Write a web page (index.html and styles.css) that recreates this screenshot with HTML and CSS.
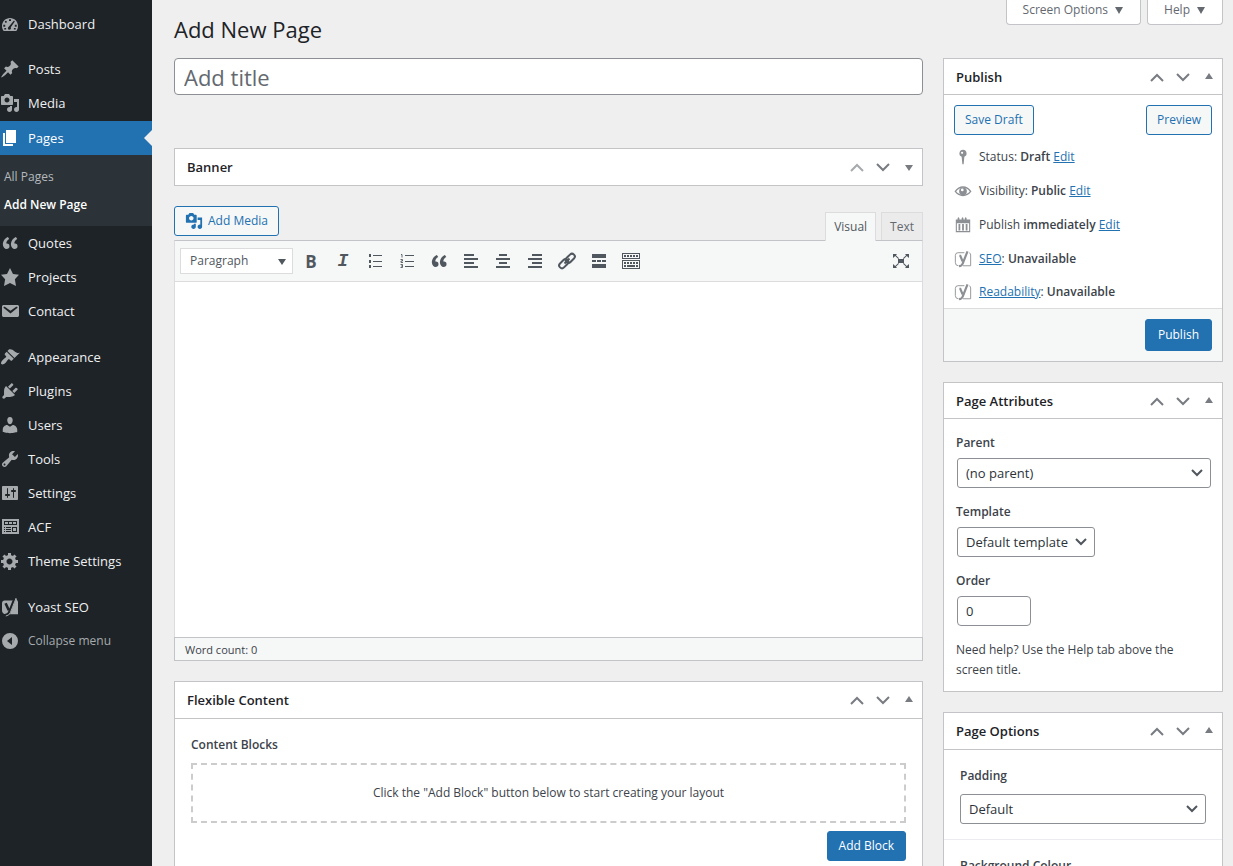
FILE: index.html
```html
<!DOCTYPE html>
<html lang="en">
<head>
<meta charset="utf-8">
<meta name="viewport" content="width=device-width, initial-scale=1">
<title>Add New Page</title>
<link rel="stylesheet" href="styles.css">
</head>
<body>
<svg class="sprite" aria-hidden="true">
  <symbol id="i-dashboard" viewBox="0 0 20 20"><path fill-rule="evenodd" d="M3.76 17h12.48c1.1-1.37 1.76-3.11 1.76-5 0-4.42-3.58-8-8-8s-8 3.58-8 8c0 1.89.66 3.63 1.76 5zM9 5.2h2v1.9H9zM5 7.200a1 1 0 1 1 1.600 1.200A1 1 0 0 1 5 7.200zM3.300 10.800h1.900v1.900H3.300zM14.800 10.800h1.900v1.900h-1.900zM14 6.600l.8.8-4 5.900c.5 1.300-.1 2.500-1.400 2.500-1.600 0-2.100-1.900-.9-2.800zM4.300 14h1.800v1.500H4.300zM13.900 14h1.800v1.500h-1.800z"/></symbol>
  <symbol id="i-post" viewBox="0 0 20 20"><path d="M10.440 3.020l1.820-1.820 6.360 6.350-1.830 1.820c-1.050-.68-2.480-.57-3.410.36l-.75.75c-.92.93-1.040 2.350-.35 3.410l-1.830 1.820-2.410-2.410-2.800 2.790c-.42.42-3.380 2.710-3.800 2.290s1.860-3.390 2.280-3.810l2.790-2.790L4.100 9.360l1.830-1.820c1.050.69 2.480.57 3.400-.36l.75-.75c.93-.92 1.050-2.350.36-3.410z"/></symbol>
  <symbol id="i-media" viewBox="0 0 20 20"><path d="M13 11V4c0-.55-.45-1-1-1h-1.670L9 1H5L3.670 3H2c-.55 0-1 .45-1 1v7c0 .55.45 1 1 1h10c.55 0 1-.45 1-1zM7 4.500c1.380 0 2.500 1.120 2.500 2.500S8.380 9.500 7 9.500 4.500 8.380 4.500 7 5.620 4.500 7 4.500zM14 6h5v10.500c0 1.380-1.120 2.500-2.500 2.500S14 17.880 14 16.500s1.120-2.500 2.500-2.500c.17 0 .34.02.5.05V9h-3V6zm-4 8.050V13h2v3.500c0 1.380-1.120 2.500-2.500 2.500S7 17.880 7 16.500 8.120 14 9.500 14c.17 0 .34.02.5.05z"/></symbol>
  <symbol id="i-page" viewBox="0 0 20 20"><path d="M6 15V2h10v13H6zm-1 1h8v2H3V5h2v11z"/></symbol>
  <symbol id="i-quote" viewBox="0 0 20 20"><path d="M9.490 13.220c0-.74-.2-1.380-.61-1.900-.62-.78-1.830-.88-2.530-.72-.29-1.650 1.110-3.750 2.920-4.650L7.880 4c-2.730 1.300-5.420 4.280-4.960 8.050C3.210 14.430 4.590 16 6.540 16c.85 0 1.560-.25 2.120-.75s.83-1.180.83-2.030zm8.050 0c0-.74-.2-1.380-.61-1.900-.63-.78-1.830-.88-2.530-.72-.29-1.650 1.110-3.750 2.920-4.650L15.930 4c-2.730 1.300-5.410 4.280-4.950 8.050.29 2.380 1.660 3.950 3.610 3.950.85 0 1.560-.25 2.120-.75s.83-1.180.83-2.030z"/></symbol>
  <symbol id="i-star" viewBox="0 0 20 20"><path d="m10 1 3 6 6 .75-4.120 4.620L16 19l-6-3-6 3 1.130-6.630L1 7.750 7 7z"/></symbol>
  <symbol id="i-email" viewBox="0 0 20 20"><path d="M3.870 4h13.250C18.370 4 19 4.590 19 5.790v8.420c0 1.190-.63 1.790-1.880 1.790H3.870c-1.250 0-1.880-.6-1.880-1.790V5.790c0-1.200.63-1.790 1.880-1.790zm6.620 8.600l6.740-5.530c.24-.2.43-.66.13-1.070-.29-.41-.82-.42-1.170-.17l-5.700 3.860L4.800 5.830c-.35-.25-.88-.24-1.170.17-.3.41-.11.87.13 1.070z"/></symbol>
  <symbol id="i-brush" viewBox="0 0 20 20"><path d="M14.480 11.060L7.410 3.990l1.500-1.500c.5-.56 2.300-.47 3.510.32 1.210.8 1.430 1.280 2.910 2.100 1.180.64 2.450 1.260 4.450.85zm-.71.71L6.700 4.700 4.930 6.470c-.39.39-.39 1.020 0 1.410l1.060 1.060c.39.39.39 1.030 0 1.420-.6.6-1.430 1.110-2.210 1.690-.35.26-.7.53-1.010.84C1.430 14.230.4 16.080 1.400 17.070c.99 1 2.840-.03 4.180-1.360.31-.31.58-.66.85-1.020.57-.78 1.080-1.610 1.690-2.210.39-.39 1.020-.39 1.410 0l1.060 1.060c.39.39 1.020.39 1.410 0z"/></symbol>
  <symbol id="i-plug" viewBox="0 0 20 20"><path d="M13.110 4.360L9.870 7.600 8 5.730l3.240-3.240c.35-.34 1.050-.2 1.560.32.52.51.66 1.210.31 1.550zm-8 1.770l.91-1.120 9.010 9.010-1.190.84c-.71.71-2.630 1.160-3.820 1.160H6.140L4.900 17.260c-.59.59-1.540.59-2.120 0-.59-.58-.59-1.530 0-2.120l1.240-1.240v-3.880c0-1.130.4-3.190 1.090-3.890zm7.260 3.970l3.240-3.240c.34-.35 1.040-.21 1.550.31.52.51.66 1.210.31 1.550l-3.240 3.250z"/></symbol>
  <symbol id="i-user" viewBox="0 0 20 20"><path d="M10 9.250c-2.270 0-2.730-3.440-2.730-3.440C7 4.020 7.820 2 9.970 2c2.160 0 2.980 2.020 2.710 3.810 0 0-.41 3.440-2.680 3.440zm0 2.570L12.720 10c2.390 0 4.520 2.330 4.520 4.530v2.490s-3.650 1.130-7.240 1.130c-3.650 0-7.240-1.130-7.240-1.130v-2.490c0-2.250 1.940-4.480 4.470-4.480z"/></symbol>
  <symbol id="i-tools" viewBox="0 0 20 20"><path d="M16.680 9.770c-1.340 1.340-3.300 1.670-4.950.99l-5.410 6.520c-.99.99-2.590.99-3.580 0s-.99-2.590 0-3.570l6.520-5.420c-.68-1.650-.35-3.610.99-4.950 1.280-1.280 3.120-1.620 4.720-1.060l-2.890 2.890 2.820 2.820 2.860-2.870c.53 1.580.18 3.390-1.080 4.650zM3.810 16.210c.4.39 1.040.39 1.430 0 .4-.4.4-1.040 0-1.430-.39-.4-1.030-.4-1.430 0-.39.39-.39 1.030 0 1.430z"/></symbol>
  <symbol id="i-sliders" viewBox="0 0 20 20"><path fill-rule="evenodd" d="M18 16V4c0-.55-.45-1-1-1H3c-.55 0-1 .45-1 1v12c0 .55.45 1 1 1h14c.55 0 1-.45 1-1zM8 11h1c.55 0 1 .45 1 1s-.45 1-1 1H8v1.500c0 .28-.22.5-.5.5s-.5-.22-.5-.5V13H6c-.55 0-1-.45-1-1s.45-1 1-1h1V5.500c0-.28.22-.5.5-.5s.5.22.5.5V11zm5-2h-1c-.55 0-1-.45-1-1s.45-1 1-1h1V5.500c0-.28.22-.5.5-.5s.5.22.5.5V7h1c.55 0 1 .45 1 1s-.45 1-1 1h-1v5.500c0 .28-.22.5-.5.5s-.5-.22-.5-.5V9z"/></symbol>
  <symbol id="i-acf" viewBox="0 0 20 20"><path fill-rule="evenodd" d="M2 2h17v15H2zM4 4v4h13V4zM4 10v1h1v-1zM6 10v1h5v-1zM4 12v1h1v-1zM6 12v1h5v-1zM4 14v1h1v-1zM6 14v1h5v-1zM12 10v5h5v-5zM13 11h3v3h-3zM5 5h3v2H5zM9 5h3v2H9zM13 5h3v2h-3z"/></symbol>
  <symbol id="i-gear" viewBox="0 0 20 20"><path d="M18 12h-2.180c-.17.7-.44 1.350-.81 1.930l1.540 1.540-2.100 2.100-1.540-1.540c-.58.36-1.230.63-1.910.79V19H8v-2.180c-.68-.16-1.330-.43-1.910-.79l-1.540 1.540-2.120-2.120 1.540-1.540c-.36-.58-.63-1.230-.79-1.910H1V9.030h2.170c.16-.7.44-1.350.8-1.940L2.430 5.550l2.100-2.100 1.540 1.540c.58-.37 1.240-.64 1.930-.81V2h3v2.180c.68.16 1.330.43 1.910.79l1.540-1.540 2.120 2.120-1.540 1.540c.36.59.64 1.240.8 1.940H18V12zm-8.500 1.500c1.660 0 3-1.340 3-3s-1.340-3-3-3-3 1.340-3 3 1.340 3 3 3z"/></symbol>
  <symbol id="i-yoast" viewBox="0 0 20 20"><path d="M4.500 3.500h7.800L16 1l2 3.800v12.400H6.500c-3 0-4.500-1.500-4.500-4V6.500c0-2 1-3 2.500-3z"/><path d="M5.600 6.300l3.200 7M14.800 1.300L9.200 15.500Q8.300 18 5.200 18" fill="none" stroke="#1d2327" stroke-width="2.600"/><path d="M16 1.300L10.400 15.500Q9.200 18.700 5.800 19" fill="none" stroke="currentColor" stroke-width="1"/></symbol>
  <symbol id="i-yoast-line" viewBox="0 0 20 20"><path d="M11.500 3H4.500Q1.500 3 1.500 6v8q0 3.500 3.500 3.500M10 17.500h8.500V5.500Q18.500 3.500 17 3.200" fill="none" stroke="currentColor"/><path d="M6 6.500h1l2.500 6M15 1.500L9.700 15Q8.600 18 5.600 18" fill="none" stroke="currentColor" stroke-width="2.400"/></symbol>
  <symbol id="i-collapse" viewBox="0 0 20 20"><path fill-rule="evenodd" d="M10 2a8 8 0 1 0 0 16 8 8 0 0 0 0-16zM12 6v8l-5-4z"/></symbol>
  <symbol id="i-up" viewBox="0 0 20 20"><path d="M4 14l6-6 6 6" fill="none" stroke="currentColor" stroke-width="2"/></symbol>
  <symbol id="i-down" viewBox="0 0 20 20"><path d="M4 7l6 6 6-6" fill="none" stroke="currentColor" stroke-width="2"/></symbol>
  <symbol id="i-tri-up" viewBox="0 0 20 20"><path d="M6 12l4-6 4 6z"/></symbol>
  <symbol id="i-tri-down" viewBox="0 0 20 20"><path d="M6 8l4 6 4-6z"/></symbol>
  <symbol id="i-caret" viewBox="0 0 10 10"><path d="M1 2h8L5 9z"/></symbol>
  <symbol id="i-pin" viewBox="0 0 20 20"><path fill-rule="evenodd" d="M10 2a4 4 0 0 0-1.500 7.700L9.300 18h1.400l.8-8.300A4 4 0 0 0 10 2zM9 4.200a1.200 1.200 0 1 1 0 2.400 1.200 1.200 0 0 1 0-2.400z"/></symbol>
  <symbol id="i-eye" viewBox="0 0 20 20"><path d="M1.500 10.500Q5 5.500 10 5.500t8.500 5Q15 15 10 15t-8.500-4.500z" fill="none" stroke="currentColor" stroke-width="1.500"/><path fill-rule="evenodd" d="M10 6a4.300 4.300 0 1 0 0 8.600A4.300 4.300 0 0 0 10 6zM9.200 7.300a1.500 1.500 0 1 1 0 3 1.500 1.500 0 0 1 0-3z"/></symbol>
  <symbol id="i-calendar" viewBox="0 0 20 20"><path fill-rule="evenodd" d="M2 4h2V2.500q1-2 2 0V4h2.500V2.500q1-2 2 0V4h1.500V2.500q1-2 2 0V4h4v14H2zM3.200 8v8.800h13.600V8zM5 9h2v7H5zM9 9h2v7H9zM13 9h2v7h-2z"/></symbol>
  <symbol id="i-ul" viewBox="0 0 20 20"><path d="M4 3h2v3H4zM4 9h2v3H4zM4 14h2v3H4zM8 4h9v1H8zM8 10h9v1H8zM8 15h9v1H8z"/></symbol>
  <symbol id="i-ol" viewBox="0 0 20 20"><path d="M8 4h9v1H8zM8 10h9v1H8zM8 15h9v1H8z"/><path d="M4 3.500h1v3M3.500 8.500h2v1.500h-1.500v1.500h2M3.500 13.500h2v3h-2M4 15h1.500" fill="none" stroke="currentColor" stroke-width=".9"/></symbol>
  <symbol id="i-left" viewBox="0 0 20 20"><path d="M3 3h10v2H3zM3 7h14v2H3zM3 11h10v2H3zM3 15h14v2H3z"/></symbol>
  <symbol id="i-center" viewBox="0 0 20 20"><path d="M6 3h8v2H6zM3 7h14v2H3zM6 11h8v2H6zM3 15h14v2H3z"/></symbol>
  <symbol id="i-right" viewBox="0 0 20 20"><path d="M7 3h10v2H7zM3 7h14v2H3zM7 11h10v2H7zM3 15h14v2H3z"/></symbol>
  <symbol id="i-link" viewBox="0 0 20 20"><g fill="none" stroke="currentColor" stroke-width="2"><rect x="8" y="4.500" width="10.500" height="5.600" rx="2.800" transform="rotate(-45 13.250 7.300)"/><rect x="1.500" y="9.900" width="10.500" height="5.600" rx="2.800" transform="rotate(-45 6.750 12.700)"/><path d="M7.500 12.500l5-5"/></g></symbol>
  <symbol id="i-more" viewBox="0 0 20 20"><path d="M3 3h14v4H3zM3 9h4v2H3zM8 9h4v2H8zM13 9h4v2h-4zM3 13h14v4H3z"/></symbol>
  <symbol id="i-sink" viewBox="0 0 20 20"><path fill-rule="evenodd" d="M1 2h18v6H1zM2 3v4h16V3zM1 9h18v9H1zM2 10v7h16v-7z"/><path d="M3 5h14M3 12h14" fill="none" stroke="currentColor" stroke-width="2" stroke-dasharray="2 1"/><path d="M3 15h2M6 15h8M15 15h2" fill="none" stroke="currentColor" stroke-width="2"/></symbol>
  <symbol id="i-full" viewBox="0 0 20 20"><path d="M7 8h6v4H7zM2 3h4L4.900 4.200 8 7.300 7.300 8 4.200 4.900 2 7zM18 3v4l-2.200-2.100L12.700 8l-.7-.7 3.100-3.100L14 3zM2 17v-4l2.200 2.100L7.300 12l.7.7-3.100 3.100L6 17zM18 17h-4l1.100-1.200L12 12.700l.7-.7 3.100 3.100L18 13z"/></symbol>
</svg>

<div class="shell">
  <nav class="menu" aria-label="Main menu">
    <a class="menu-item" href="#"><svg class="icon"><use href="#i-dashboard"/></svg>Dashboard</a>
    <div class="menu-gap"></div>
    <a class="menu-item" href="#"><svg class="icon"><use href="#i-post"/></svg>Posts</a>
    <a class="menu-item" href="#"><svg class="icon"><use href="#i-media"/></svg>Media</a>
    <a class="menu-item current" href="#"><svg class="icon"><use href="#i-page"/></svg>Pages</a>
    <div class="submenu">
      <a class="submenu-item" href="#">All Pages</a>
      <a class="submenu-item selected" href="#">Add New Page</a>
    </div>
    <a class="menu-item" href="#"><svg class="icon"><use href="#i-quote"/></svg>Quotes</a>
    <a class="menu-item" href="#"><svg class="icon"><use href="#i-star"/></svg>Projects</a>
    <a class="menu-item" href="#"><svg class="icon"><use href="#i-email"/></svg>Contact</a>
    <div class="menu-gap wide"></div>
    <a class="menu-item" href="#"><svg class="icon"><use href="#i-brush"/></svg>Appearance</a>
    <a class="menu-item" href="#"><svg class="icon"><use href="#i-plug"/></svg>Plugins</a>
    <a class="menu-item" href="#"><svg class="icon"><use href="#i-user"/></svg>Users</a>
    <a class="menu-item" href="#"><svg class="icon"><use href="#i-tools"/></svg>Tools</a>
    <a class="menu-item" href="#"><svg class="icon"><use href="#i-sliders"/></svg>Settings</a>
    <a class="menu-item" href="#"><svg class="icon"><use href="#i-acf"/></svg>ACF</a>
    <a class="menu-item" href="#"><svg class="icon"><use href="#i-gear"/></svg>Theme Settings</a>
    <div class="menu-gap wide"></div>
    <a class="menu-item" href="#"><svg class="icon"><use href="#i-yoast"/></svg>Yoast SEO</a>
    <button class="menu-item collapse" type="button"><svg class="icon"><use href="#i-collapse"/></svg>Collapse menu</button>
  </nav>

  <main class="content">
    <header class="top">
      <h1 class="page-title">Add New Page</h1>
      <div class="screen-links">
        <button class="screen-link" type="button">Screen Options <svg class="caret"><use href="#i-caret"/></svg></button>
        <button class="screen-link" type="button">Help <svg class="caret"><use href="#i-caret"/></svg></button>
      </div>
    </header>

    <div class="columns">
      <div class="primary">
        <input class="title-input" type="text" placeholder="Add title" aria-label="Add title">

        <section class="box">
          <header class="box-head">
            <h2 class="box-title">Banner</h2>
            <button class="handle dim" type="button" aria-label="Move up"><svg class="icon"><use href="#i-up"/></svg></button>
            <button class="handle" type="button" aria-label="Move down"><svg class="icon"><use href="#i-down"/></svg></button>
            <button class="handle" type="button" aria-label="Toggle panel"><svg class="icon"><use href="#i-tri-down"/></svg></button>
          </header>
        </section>

        <section class="editor">
          <div class="editor-top">
            <button class="button" type="button"><svg class="icon"><use href="#i-media"/></svg>Add Media</button>
            <div class="tabs">
              <button class="tab active" type="button">Visual</button>
              <button class="tab" type="button">Text</button>
            </div>
          </div>
          <div class="toolbar">
            <select class="format" aria-label="Format"><option>Paragraph</option></select>
            <button class="tool bold" type="button" aria-label="Bold">B</button>
            <button class="tool italic" type="button" aria-label="Italic">I</button>
            <button class="tool" type="button" aria-label="Bulleted list"><svg class="icon"><use href="#i-ul"/></svg></button>
            <button class="tool" type="button" aria-label="Numbered list"><svg class="icon"><use href="#i-ol"/></svg></button>
            <button class="tool" type="button" aria-label="Blockquote"><svg class="icon"><use href="#i-quote"/></svg></button>
            <button class="tool" type="button" aria-label="Align left"><svg class="icon"><use href="#i-left"/></svg></button>
            <button class="tool" type="button" aria-label="Align center"><svg class="icon"><use href="#i-center"/></svg></button>
            <button class="tool" type="button" aria-label="Align right"><svg class="icon"><use href="#i-right"/></svg></button>
            <button class="tool" type="button" aria-label="Insert link"><svg class="icon"><use href="#i-link"/></svg></button>
            <button class="tool" type="button" aria-label="Read more"><svg class="icon"><use href="#i-more"/></svg></button>
            <button class="tool" type="button" aria-label="Toolbar toggle"><svg class="icon"><use href="#i-sink"/></svg></button>
            <button class="tool last" type="button" aria-label="Fullscreen"><svg class="icon"><use href="#i-full"/></svg></button>
          </div>
          <textarea class="editor-area" aria-label="Page content"></textarea>
          <div class="editor-status">Word count: 0</div>
        </section>

        <section class="box">
          <header class="box-head">
            <h2 class="box-title">Flexible Content</h2>
            <button class="handle" type="button" aria-label="Move up"><svg class="icon"><use href="#i-up"/></svg></button>
            <button class="handle" type="button" aria-label="Move down"><svg class="icon"><use href="#i-down"/></svg></button>
            <button class="handle" type="button" aria-label="Toggle panel"><svg class="icon"><use href="#i-tri-up"/></svg></button>
          </header>
          <div class="blocks">
            <h3 class="label">Content Blocks</h3>
            <div class="blocks-empty">Click the "Add Block" button below to start creating your layout</div>
            <button class="button filled" type="button">Add Block</button>
          </div>
        </section>
      </div>

      <aside class="secondary">
        <section class="box">
          <header class="box-head short">
            <h2 class="box-title">Publish</h2>
            <button class="handle" type="button" aria-label="Move up"><svg class="icon"><use href="#i-up"/></svg></button>
            <button class="handle" type="button" aria-label="Move down"><svg class="icon"><use href="#i-down"/></svg></button>
            <button class="handle" type="button" aria-label="Toggle panel"><svg class="icon"><use href="#i-tri-up"/></svg></button>
          </header>
          <div class="publish-actions">
            <button class="button" type="button">Save Draft</button>
            <button class="button" type="button">Preview</button>
          </div>
          <ul class="facts">
            <li class="fact"><svg class="icon"><use href="#i-pin"/></svg><span>Status: <b>Draft</b> <a href="#">Edit</a></span></li>
            <li class="fact"><svg class="icon"><use href="#i-eye"/></svg><span>Visibility: <b>Public</b> <a href="#">Edit</a></span></li>
            <li class="fact"><svg class="icon"><use href="#i-calendar"/></svg><span>Publish <b>immediately</b> <a href="#">Edit</a></span></li>
            <li class="fact"><svg class="icon"><use href="#i-yoast-line"/></svg><span><a href="#">SEO</a>: <b>Unavailable</b></span></li>
            <li class="fact"><svg class="icon"><use href="#i-yoast-line"/></svg><span><a href="#">Readability</a>: <b>Unavailable</b></span></li>
          </ul>
          <footer class="publish-foot">
            <button class="button filled tall" type="button">Publish</button>
          </footer>
        </section>

        <section class="box">
          <header class="box-head short">
            <h2 class="box-title">Page Attributes</h2>
            <button class="handle" type="button" aria-label="Move up"><svg class="icon"><use href="#i-up"/></svg></button>
            <button class="handle" type="button" aria-label="Move down"><svg class="icon"><use href="#i-down"/></svg></button>
            <button class="handle" type="button" aria-label="Toggle panel"><svg class="icon"><use href="#i-tri-up"/></svg></button>
          </header>
          <div class="attributes">
            <label class="label" for="parent">Parent</label>
            <select class="field wide" id="parent"><option>(no parent)</option></select>
            <label class="label" for="template">Template</label>
            <select class="field template" id="template"><option>Default template</option></select>
            <label class="label" for="order">Order</label>
            <input class="field order" id="order" type="text" value="0">
            <p class="help">Need help? Use the Help tab above the screen title.</p>
          </div>
        </section>

        <section class="box">
          <header class="box-head">
            <h2 class="box-title">Page Options</h2>
            <button class="handle" type="button" aria-label="Move up"><svg class="icon"><use href="#i-up"/></svg></button>
            <button class="handle" type="button" aria-label="Move down"><svg class="icon"><use href="#i-down"/></svg></button>
            <button class="handle" type="button" aria-label="Toggle panel"><svg class="icon"><use href="#i-tri-up"/></svg></button>
          </header>
          <div class="option">
            <label class="label" for="padding">Padding</label>
            <select class="field wide" id="padding"><option>Default</option></select>
          </div>
          <div class="option">
            <label class="label" for="colour">Background Colour</label>
            <select class="field wide" id="colour"><option>Default</option></select>
          </div>
        </section>
      </aside>
    </div>
  </main>
</div>
</body>
</html>
```
FILE: styles.css
```css
* { box-sizing: border-box; }

body {
  margin: 0;
  height: 100vh;
  overflow: hidden;
  background: #efefef;
  color: #3c434a;
  font-family: "Open Sans", "Noto Sans", sans-serif;
  font-size: 12px;
  line-height: 20px;
}

button, input, select, textarea { font: inherit; color: inherit; margin: 0; }
h1, h2, h3, p, ul { margin: 0; padding: 0; }
b { font-weight: 600; }
a { color: #2271b1; }

.sprite { display: none; }
.icon { width: 20px; height: 20px; flex: none; fill: currentColor; }
.caret { width: 10px; height: 10px; fill: currentColor; }

.shell { display: flex; min-height: 100vh; }

/* Side menu */
.menu {
  flex: none;
  width: 152px;
  padding-top: 7px;
  background: #1d2327;
  font-size: 13px;
}
.menu-item {
  position: relative;
  display: flex;
  align-items: center;
  gap: 8px;
  width: 100%;
  height: 34px;
  padding: 0;
  border: 0;
  background: none;
  color: #f0f0f1;
  text-decoration: none;
}
.menu-item .icon { color: #a7aaad; }
.menu-gap { height: 11px; }
.menu-gap.wide { height: 12px; }
.menu-item.current { margin-top: 1px; background: #2271b1; color: #fff; }
.menu-item.current .icon { color: #fff; }
.menu-item.current::after {
  content: "";
  position: absolute;
  right: 0;
  top: 9px;
  border: 8px solid transparent;
  border-left: 0;
  border-right-color: #efefef;
}
.menu-item.collapse { color: #a7aaad; font-size: 12px; }
.submenu { padding: 8px 4px 7px; background: #2c3338; font-size: 12px; }
.submenu-item {
  display: block;
  line-height: 28px;
  color: #b4b9be;
  text-decoration: none;
}
.submenu-item.selected { color: #fff; font-weight: 600; }

/* Header */
.content { flex: 1; min-width: 0; padding: 0 10px 0 22px; }
.top { display: flex; justify-content: space-between; align-items: flex-start; height: 58px; }
.page-title {
  padding-top: 13px;
  color: #1d2327;
  font-size: 22px;
  font-weight: 400;
  line-height: 32px;
}
.screen-links { display: flex; gap: 6px; }
.screen-link {
  display: flex;
  align-items: center;
  gap: 6px;
  height: 25px;
  padding: 0 16px 5px;
  border: 1px solid #c3c4c7;
  border-top: 0;
  border-radius: 0 0 4px 4px;
  background: #fff;
  color: #646970;
}

.columns { display: flex; align-items: flex-start; gap: 20px; }
.primary { flex: 1; min-width: 0; }
.secondary { flex: none; width: 280px; }

.title-input {
  display: block;
  width: 100%;
  height: 37px;
  margin-bottom: 53px;
  padding: 0 9px;
  border: 1px solid #8c8f94;
  border-radius: 4px;
  background: #fff;
  font-size: 22px;
}
.title-input::placeholder { color: #646970; opacity: 1; }

/* Panels */
.box {
  margin-bottom: 20px;
  border: 1px solid #c3c4c7;
  background: #fff;
}
.box-head { display: flex; align-items: center; height: 36px; padding-left: 12px; }
.box-head:not(:last-child) { height: 37px; border-bottom: 1px solid #c3c4c7; }
.box-head.short:not(:last-child) { height: 36px; }
.box-title { flex: 1; color: #1d2327; font-size: 13px; font-weight: 600; }
.handle {
  display: flex;
  align-items: center;
  justify-content: center;
  width: 26px;
  height: 34px;
  padding: 0;
  border: 0;
  background: none;
  color: #787c82;
}
.handle.dim { color: #a7aaad; }

/* Buttons */
.button {
  display: flex;
  align-items: center;
  height: 30px;
  padding: 0 10px;
  border: 1px solid #2271b1;
  border-radius: 3px;
  background: #f6f7f7;
  color: #2271b1;
}
.button .icon { width: 18px; height: 18px; margin-right: 5px; }
.button.filled { padding: 0 11px; background: #2271b1; color: #fff; }
.button.tall { height: 32px; padding: 0 12px; }

/* Editor */
.editor { margin-bottom: 20px; }
.editor-top { display: flex; justify-content: space-between; height: 34px; }
.tabs { display: flex; align-items: flex-end; gap: 5px; }
.tab {
  height: 28px;
  padding: 0 8px;
  border: 1px solid #dcdcde;
  border-bottom: 0;
  background: #ebebeb;
  color: #646970;
}
.tab.active {
  position: relative;
  height: 29px;
  margin-bottom: -1px;
  background: #f6f7f7;
  color: #50575e;
}
.toolbar {
  display: flex;
  align-items: center;
  height: 42px;
  padding: 0 5px;
  border: 1px solid #dcdcde;
  border-top-color: #c3c4c7;
  background: #f6f7f7;
  color: #50575e;
}
.format {
  width: 113px;
  height: 26px;
  margin-right: 2px;
  padding: 0 9px;
  appearance: none;
  border: 1px solid #dcdcde;
  border-radius: 0;
  background: #fff url("data:image/svg+xml,%3Csvg xmlns='http://www.w3.org/2000/svg' width='8' height='7'%3E%3Cpath d='M0 0h8L4 6z' fill='%2350575e'/%3E%3C/svg%3E") no-repeat right 6px top 10px;
}
.tool {
  display: flex;
  align-items: center;
  justify-content: center;
  width: 32px;
  height: 30px;
  padding: 0;
  border: 0;
  background: none;
}
.tool.bold { font: bold 17px "Open Sans", sans-serif; }
.tool.italic { font: italic bold 18px "Liberation Mono", monospace; }
.tool.last { margin-left: auto; }
.editor-area {
  display: block;
  width: 100%;
  height: 355px;
  padding: 10px;
  border: 1px solid #dcdcde;
  border-width: 0 1px;
  border-radius: 0;
  background: #fff;
  resize: none;
}
.editor-status {
  height: 24px;
  padding-left: 10px;
  border: 1px solid #c3c4c7;
  background: #f6f7f7;
  font-size: 11px;
  line-height: 23px;
}

.blocks { display: flex; flex-direction: column; padding: 16px; }
.blocks .button { align-self: flex-end; }
.blocks-empty {
  margin: 8px 0;
  padding: 18px;
  border: 2px dashed #ccc;
  text-align: center;
}

/* Publish panel */
.publish-actions { display: flex; justify-content: space-between; padding: 10px 10px 0; }
.facts { padding: 5px 10px 0; list-style: none; }
.fact { display: flex; align-items: center; gap: 7px; height: 34px; }
.fact:last-child { height: 32px; }
.fact .icon { width: 18px; color: #8c8f94; }
.publish-foot {
  display: flex;
  justify-content: flex-end;
  padding: 10px;
  border-top: 1px solid #dcdcde;
  background: #f6f7f7;
}

/* Fields */
.label { display: block; font-size: 12px; font-weight: 600; line-height: 20px; }
.field {
  display: block;
  height: 30px;
  padding: 0 8px;
  border: 1px solid #8c8f94;
  border-radius: 3px;
  background-color: #fff;
  color: #2c3338;
  font-size: 13px;
}
select.field {
  appearance: none;
  background-image: url("data:image/svg+xml,%3Csvg xmlns='http://www.w3.org/2000/svg' width='12' height='8'%3E%3Cpath d='M1 1l5 5 5-5' fill='none' stroke='%2350575e' stroke-width='2'/%3E%3C/svg%3E");
  background-repeat: no-repeat;
  background-position: right 7px center;
}
.field.wide { width: 100%; }
.field.template { width: 138px; }
.field.order { width: 74px; border-radius: 4px; }
.attributes { padding: 14px 11px 11px 12px; }
.attributes .field { margin: 5px 0 14px 1px; }
.attributes .field.wide { width: calc(100% - 1px); }
.option { padding: 16px 16px 15px; border-bottom: 1px solid #eaecf0; }
.option .field { margin-top: 8px; }
```
